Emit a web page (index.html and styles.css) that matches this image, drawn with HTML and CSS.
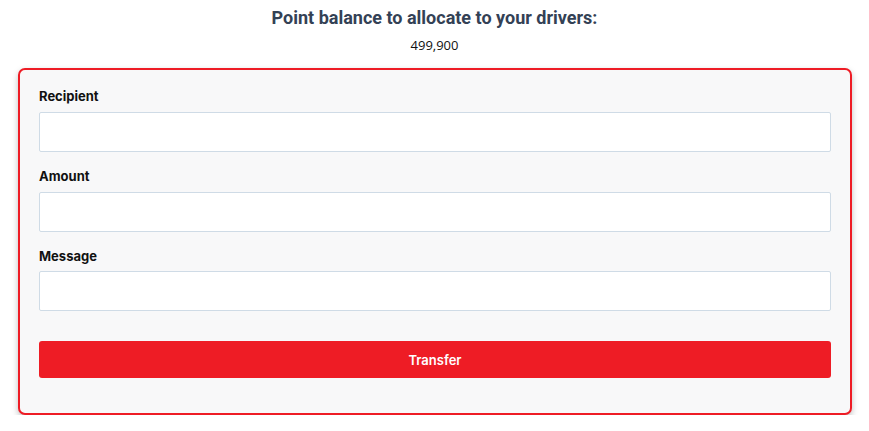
FILE: index.html
```html
<!DOCTYPE html>
<html>
<head>
<meta charset="utf-8">
<link rel="stylesheet" href="styles.css">
</head>
<body>
<header class="summary">
  <h1 class="summary-title">Point balance to allocate to your drivers:</h1>
  <p class="summary-balance">499,900</p>
</header>
<form class="card">
  <label class="field-label">Recipient</label>
  <input class="field-input" type="text">
  <label class="field-label">Amount</label>
  <input class="field-input" type="text">
  <label class="field-label field-label-last">Message</label>
  <input class="field-input field-input-last" type="text">
  <button class="btn-transfer" type="button">Transfer</button>
</form>
</body>
</html>
```
FILE: styles.css
```css
* { box-sizing: border-box; }
body {
  margin: 0;
  background: #ffffff;
  font-family: Inter, "Liberation Sans", sans-serif;
}
.summary {
  text-align: center;
  padding-top: 6px;
}
.summary-title {
  margin: 0;
  font-family: Roboto, sans-serif;
  font-weight: 700;
  font-size: 18px;
  line-height: 24px;
  color: #334155;
}
.summary-balance {
  margin: 5px 0 0;
  font-family: "Open Sans", sans-serif;
  font-size: 13px;
  line-height: 20px;
  color: #111111;
}
.card {
  margin: 13px 17px 0 18px;
  border: 2px solid #ee1c25;
  border-radius: 7px;
  background: #f8f8f9;
  box-shadow: 0 3px 6px rgba(0,0,0,0.25);
  padding: 16px 19px 35px;
  display: flex;
  flex-direction: column;
}
.field-label {
  font-size: 13px;
  font-weight: 700;
  line-height: 20px;
  color: #111111;
  margin-bottom: 6px;
}
.field-label-last { margin-bottom: 5px; }
.field-input {
  height: 40px;
  border: 1px solid #cfdbe6;
  border-radius: 2px;
  background: #ffffff;
  margin: 0 0 14px;
  font: inherit;
}
.field-input-last { margin-bottom: 30px; }
.btn-transfer {
  height: 37px;
  border: none;
  border-radius: 3px;
  background: #ee1c25;
  color: #ffffff;
  font-family: Inter, sans-serif;
  font-size: 13px;
  font-weight: 600;
}
```
